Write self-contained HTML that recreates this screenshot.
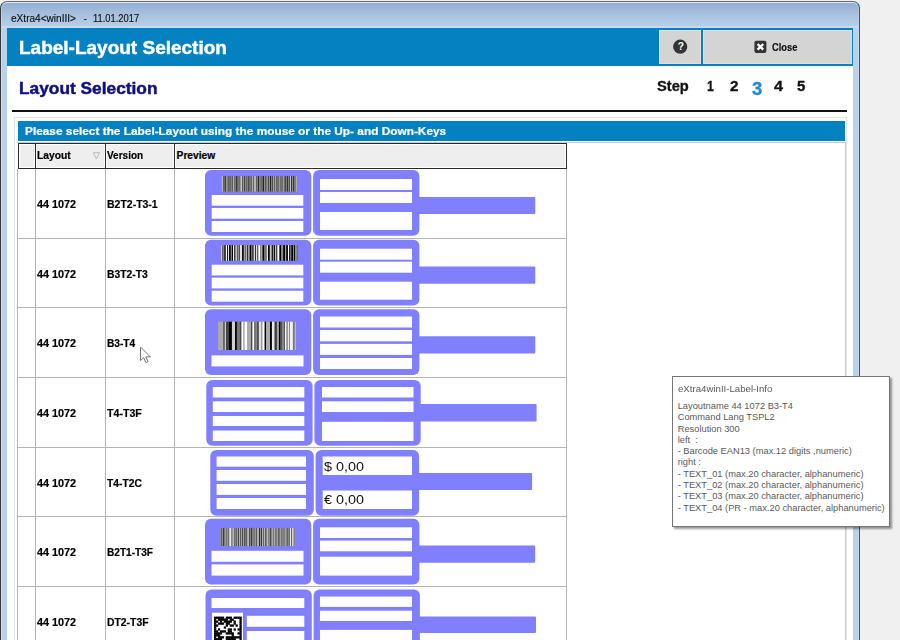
<!DOCTYPE html>
<html><head><meta charset="utf-8">
<style>
*{box-sizing:border-box;margin:0;padding:0}
html,body{width:900px;height:640px;overflow:hidden;background:#f0f0f0;font-family:"Liberation Sans",sans-serif;}
div{position:absolute}
.t{white-space:pre;transform-origin:0 0;line-height:normal}
#win{left:0;top:1px;width:860px;height:660px;border-radius:7px 7px 0 0;background:linear-gradient(#93add0 0px,#a9c3e0 14px,#b9d2eb 27px,#b9d2eb 100%);border:1px solid #6a6a6a;border-left:1.3px solid #3a3a3a;border-right:1.7px solid #1d5f7c;overflow:hidden}
#win:before{content:"";position:absolute;left:0;top:0;right:0;bottom:0;border:1px solid rgba(255,255,255,.75);border-radius:6px 6px 0 0;border-right-color:rgba(255,255,255,.2);border-left-color:rgba(255,255,255,.25)}
#content{left:7px;top:28px;width:846px;height:640px;background:#fff}
#bar{left:7px;top:28px;width:846px;height:38px;background:#0481c1}
.btn{top:29.5px;height:34.8px;background:#d4d4d4;box-shadow:inset 0 0 0 1px #e6dcd8}
#hr{left:12px;top:109.5px;width:835px;height:2px;background:#111}
#panel{left:14.2px;top:117px;width:833.3px;height:600px;border:1px solid #e4e4e4;background:#fff}
#grid{left:17.3px;top:141.8px;width:828.5px;height:600px;border:1px solid #cdcdcd;border-left:none;background:#fff}
#info{left:18px;top:121px;width:827px;height:19.8px;background:#0481c1}
.hd{top:142.8px;height:26px;background:#eee;border:1px solid #2a2a2a;box-shadow:inset 0 0 0 1px #fff}
.vl{top:169px;width:1px;height:600px;background:#b4b4b4}
.hl{left:18px;width:549px;height:1px;background:#b4b4b4}
#tip{left:671.8px;top:376.2px;width:218px;height:151.2px;background:#fff;border:1px solid #767676;box-shadow:2px 2px 2px rgba(0,0,0,.4)}
svg{position:absolute;left:0;top:0}
</style></head><body>
<div id="win"></div>
<div style="left:2px;top:26.2px;width:856px;height:1.8px;background:#c9d9ef"></div>
<div id="content"></div>
<div id="bar"></div>
<div class="btn" style="left:659.2px;width:41.8px"></div>
<div class="btn" style="left:702.8px;width:149px"></div>
<div id="hr"></div>
<div id="panel"></div>
<div id="grid"></div>
<div id="info"></div>
<div class="hd" style="left:18.2px;width:18px"></div>
<div class="hd" style="left:35.2px;width:70.5px"></div>
<div class="hd" style="left:104.7px;width:70.5px"></div>
<div class="hd" style="left:174.2px;width:393px"></div>
<div class="vl" style="left:17.3px"></div><div class="vl" style="left:35.2px"></div><div class="vl" style="left:104.7px"></div><div class="vl" style="left:174.2px"></div><div class="vl" style="left:566.2px"></div>
<div class="hl" style="top:237.5px"></div><div class="hl" style="top:307.1px"></div><div class="hl" style="top:376.8px"></div><div class="hl" style="top:446.5px"></div><div class="hl" style="top:516.1px"></div><div class="hl" style="top:585.8px"></div>
<svg width="900" height="640" viewBox="0 0 900 640">
<defs><filter id="bl" x="-5%" y="-5%" width="110%" height="110%"><feGaussianBlur stdDeviation="0.45 0"/></filter></defs>
<rect x="205.00" y="170.00" width="106.30" height="65.70" rx="6" fill="#8080ff"/><rect x="313.10" y="170.00" width="106.30" height="65.70" rx="6" fill="#8080ff"/><rect x="416.40" y="196.90" width="118.90" height="17.20" rx="1" fill="#8080ff"/><g filter="url(#bl)"><rect x="221.90" y="176.1" width="74.70" height="15.40" fill="#888"/><rect x="221.90" y="176.1" width="1.30" height="15.40" fill="#c8c8c8"/><rect x="222.90" y="176.1" width="1.20" height="15.40" fill="#585858"/><rect x="223.80" y="176.1" width="1.10" height="15.40" fill="#888888"/><rect x="224.60" y="176.1" width="1.80" height="15.40" fill="#404040"/><rect x="226.10" y="176.1" width="1.90" height="15.40" fill="#a0a0a0"/><rect x="227.70" y="176.1" width="1.20" height="15.40" fill="#404040"/><rect x="228.60" y="176.1" width="1.10" height="15.40" fill="#888888"/><rect x="229.40" y="176.1" width="1.80" height="15.40" fill="#606060"/><rect x="230.90" y="176.1" width="1.10" height="15.40" fill="#989898"/><rect x="231.70" y="176.1" width="1.80" height="15.40" fill="#585858"/><rect x="233.20" y="176.1" width="1.30" height="15.40" fill="#c8c8c8"/><rect x="234.20" y="176.1" width="1.20" height="15.40" fill="#585858"/><rect x="235.10" y="176.1" width="1.10" height="15.40" fill="#909090"/><rect x="235.90" y="176.1" width="1.20" height="15.40" fill="#202020"/><rect x="236.80" y="176.1" width="1.10" height="15.40" fill="#888888"/><rect x="237.60" y="176.1" width="1.30" height="15.40" fill="#404040"/><rect x="238.60" y="176.1" width="1.10" height="15.40" fill="#c8c8c8"/><rect x="239.40" y="176.1" width="1.30" height="15.40" fill="#404040"/><rect x="240.40" y="176.1" width="1.90" height="15.40" fill="#c8c8c8"/><rect x="242.00" y="176.1" width="1.30" height="15.40" fill="#585858"/><rect x="243.00" y="176.1" width="1.30" height="15.40" fill="#989898"/><rect x="244.00" y="176.1" width="1.30" height="15.40" fill="#404040"/><rect x="245.00" y="176.1" width="1.30" height="15.40" fill="#909090"/><rect x="246.00" y="176.1" width="1.80" height="15.40" fill="#606060"/><rect x="247.50" y="176.1" width="1.10" height="15.40" fill="#a0a0a0"/><rect x="248.30" y="176.1" width="1.50" height="15.40" fill="#303030"/><rect x="249.50" y="176.1" width="1.30" height="15.40" fill="#989898"/><rect x="250.50" y="176.1" width="1.80" height="15.40" fill="#606060"/><rect x="252.00" y="176.1" width="1.30" height="15.40" fill="#b0b0b0"/><rect x="253.00" y="176.1" width="1.50" height="15.40" fill="#606060"/><rect x="254.20" y="176.1" width="1.90" height="15.40" fill="#c8c8c8"/><rect x="255.80" y="176.1" width="1.80" height="15.40" fill="#606060"/><rect x="257.30" y="176.1" width="1.10" height="15.40" fill="#888888"/><rect x="258.10" y="176.1" width="1.30" height="15.40" fill="#202020"/><rect x="259.10" y="176.1" width="1.90" height="15.40" fill="#888888"/><rect x="260.70" y="176.1" width="1.30" height="15.40" fill="#585858"/><rect x="261.70" y="176.1" width="1.30" height="15.40" fill="#909090"/><rect x="262.70" y="176.1" width="1.80" height="15.40" fill="#202020"/><rect x="264.20" y="176.1" width="1.10" height="15.40" fill="#a0a0a0"/><rect x="265.00" y="176.1" width="1.80" height="15.40" fill="#585858"/><rect x="266.50" y="176.1" width="1.90" height="15.40" fill="#989898"/><rect x="268.10" y="176.1" width="1.20" height="15.40" fill="#404040"/><rect x="269.00" y="176.1" width="1.10" height="15.40" fill="#b0b0b0"/><rect x="269.80" y="176.1" width="1.80" height="15.40" fill="#202020"/><rect x="271.30" y="176.1" width="1.30" height="15.40" fill="#a0a0a0"/><rect x="272.30" y="176.1" width="1.30" height="15.40" fill="#303030"/><rect x="273.30" y="176.1" width="1.30" height="15.40" fill="#c8c8c8"/><rect x="274.30" y="176.1" width="1.30" height="15.40" fill="#404040"/><rect x="275.30" y="176.1" width="1.30" height="15.40" fill="#c8c8c8"/><rect x="276.30" y="176.1" width="1.50" height="15.40" fill="#404040"/><rect x="277.50" y="176.1" width="1.30" height="15.40" fill="#989898"/><rect x="278.50" y="176.1" width="1.20" height="15.40" fill="#404040"/><rect x="279.40" y="176.1" width="1.30" height="15.40" fill="#c8c8c8"/><rect x="280.40" y="176.1" width="1.30" height="15.40" fill="#404040"/><rect x="281.40" y="176.1" width="1.10" height="15.40" fill="#888888"/><rect x="282.20" y="176.1" width="1.50" height="15.40" fill="#606060"/><rect x="283.40" y="176.1" width="1.30" height="15.40" fill="#c8c8c8"/><rect x="284.40" y="176.1" width="1.80" height="15.40" fill="#404040"/><rect x="285.90" y="176.1" width="1.30" height="15.40" fill="#888888"/><rect x="286.90" y="176.1" width="1.50" height="15.40" fill="#303030"/><rect x="288.10" y="176.1" width="1.30" height="15.40" fill="#888888"/><rect x="289.10" y="176.1" width="1.20" height="15.40" fill="#484848"/><rect x="290.00" y="176.1" width="1.30" height="15.40" fill="#c8c8c8"/><rect x="291.00" y="176.1" width="1.30" height="15.40" fill="#303030"/><rect x="292.00" y="176.1" width="1.30" height="15.40" fill="#909090"/><rect x="293.00" y="176.1" width="1.20" height="15.40" fill="#303030"/><rect x="293.90" y="176.1" width="1.10" height="15.40" fill="#888888"/><rect x="294.70" y="176.1" width="1.20" height="15.40" fill="#585858"/><rect x="295.60" y="176.1" width="1.30" height="15.40" fill="#b0b0b0"/></g><rect x="211.70" y="195.00" width="91.60" height="10.70" fill="#fefeff"/><rect x="211.70" y="208.00" width="91.60" height="10.70" fill="#fefeff"/><rect x="211.70" y="221.00" width="91.60" height="11.00" fill="#fefeff"/><rect x="320.00" y="179.00" width="92.00" height="11.00" fill="#fefeff"/><rect x="320.00" y="192.00" width="92.00" height="11.00" fill="#fefeff"/><rect x="320.00" y="212.00" width="92.00" height="18.00" fill="#fefeff"/>
<rect x="205.00" y="239.70" width="106.30" height="65.70" rx="6" fill="#8080ff"/><rect x="313.10" y="239.70" width="106.30" height="65.70" rx="6" fill="#8080ff"/><rect x="416.40" y="266.60" width="118.90" height="17.20" rx="1" fill="#8080ff"/><g filter="url(#bl)"><rect x="221.40" y="245.1" width="75.60" height="15.70" fill="#888"/><rect x="221.40" y="245.1" width="1.20" height="15.70" fill="#ffffff"/><rect x="222.30" y="245.1" width="1.20" height="15.70" fill="#303030"/><rect x="223.20" y="245.1" width="1.20" height="15.70" fill="#909090"/><rect x="224.10" y="245.1" width="2.10" height="15.70" fill="#303030"/><rect x="225.90" y="245.1" width="1.50" height="15.70" fill="#ffffff"/><rect x="227.10" y="245.1" width="1.20" height="15.70" fill="#000000"/><rect x="228.00" y="245.1" width="1.20" height="15.70" fill="#ffffff"/><rect x="228.90" y="245.1" width="2.10" height="15.70" fill="#101010"/><rect x="230.70" y="245.1" width="1.50" height="15.70" fill="#909090"/><rect x="231.90" y="245.1" width="1.50" height="15.70" fill="#000000"/><rect x="233.10" y="245.1" width="1.50" height="15.70" fill="#ffffff"/><rect x="234.30" y="245.1" width="1.50" height="15.70" fill="#000000"/><rect x="235.50" y="245.1" width="1.50" height="15.70" fill="#ffffff"/><rect x="236.70" y="245.1" width="1.20" height="15.70" fill="#303030"/><rect x="237.60" y="245.1" width="1.50" height="15.70" fill="#a0a0a0"/><rect x="238.80" y="245.1" width="1.50" height="15.70" fill="#505050"/><rect x="240.00" y="245.1" width="2.30" height="15.70" fill="#e0e0e0"/><rect x="242.00" y="245.1" width="2.10" height="15.70" fill="#101010"/><rect x="243.80" y="245.1" width="1.20" height="15.70" fill="#e0e0e0"/><rect x="244.70" y="245.1" width="1.20" height="15.70" fill="#101010"/><rect x="245.60" y="245.1" width="1.50" height="15.70" fill="#e0e0e0"/><rect x="246.80" y="245.1" width="1.20" height="15.70" fill="#000000"/><rect x="247.70" y="245.1" width="2.30" height="15.70" fill="#a0a0a0"/><rect x="249.70" y="245.1" width="2.10" height="15.70" fill="#000000"/><rect x="251.50" y="245.1" width="1.20" height="15.70" fill="#c0c0c0"/><rect x="252.40" y="245.1" width="1.50" height="15.70" fill="#000000"/><rect x="253.60" y="245.1" width="1.50" height="15.70" fill="#ffffff"/><rect x="254.80" y="245.1" width="1.50" height="15.70" fill="#303030"/><rect x="256.00" y="245.1" width="1.50" height="15.70" fill="#e0e0e0"/><rect x="257.20" y="245.1" width="1.50" height="15.70" fill="#505050"/><rect x="258.40" y="245.1" width="2.30" height="15.70" fill="#ffffff"/><rect x="260.40" y="245.1" width="1.20" height="15.70" fill="#505050"/><rect x="261.30" y="245.1" width="1.50" height="15.70" fill="#c0c0c0"/><rect x="262.50" y="245.1" width="2.10" height="15.70" fill="#000000"/><rect x="264.30" y="245.1" width="1.50" height="15.70" fill="#909090"/><rect x="265.50" y="245.1" width="1.50" height="15.70" fill="#505050"/><rect x="266.70" y="245.1" width="1.50" height="15.70" fill="#ffffff"/><rect x="267.90" y="245.1" width="2.10" height="15.70" fill="#000000"/><rect x="269.70" y="245.1" width="2.30" height="15.70" fill="#c0c0c0"/><rect x="271.70" y="245.1" width="1.50" height="15.70" fill="#101010"/><rect x="272.90" y="245.1" width="1.50" height="15.70" fill="#909090"/><rect x="274.10" y="245.1" width="1.20" height="15.70" fill="#000000"/><rect x="275.00" y="245.1" width="1.50" height="15.70" fill="#c0c0c0"/><rect x="276.20" y="245.1" width="1.50" height="15.70" fill="#303030"/><rect x="277.40" y="245.1" width="2.30" height="15.70" fill="#ffffff"/><rect x="279.40" y="245.1" width="2.10" height="15.70" fill="#000000"/><rect x="281.20" y="245.1" width="2.30" height="15.70" fill="#909090"/><rect x="283.20" y="245.1" width="2.10" height="15.70" fill="#000000"/><rect x="285.00" y="245.1" width="1.50" height="15.70" fill="#a0a0a0"/><rect x="286.20" y="245.1" width="2.10" height="15.70" fill="#101010"/><rect x="288.00" y="245.1" width="1.50" height="15.70" fill="#ffffff"/><rect x="289.20" y="245.1" width="1.50" height="15.70" fill="#000000"/><rect x="290.40" y="245.1" width="1.20" height="15.70" fill="#a0a0a0"/><rect x="291.30" y="245.1" width="2.10" height="15.70" fill="#000000"/><rect x="293.10" y="245.1" width="1.20" height="15.70" fill="#909090"/><rect x="294.00" y="245.1" width="1.20" height="15.70" fill="#000000"/><rect x="294.90" y="245.1" width="2.30" height="15.70" fill="#909090"/><rect x="296.90" y="245.1" width="0.40" height="15.70" fill="#303030"/></g><rect x="211.70" y="264.70" width="91.60" height="10.70" fill="#fefeff"/><rect x="211.70" y="277.70" width="91.60" height="10.70" fill="#fefeff"/><rect x="211.70" y="290.70" width="91.60" height="11.00" fill="#fefeff"/><rect x="320.00" y="248.70" width="92.00" height="11.00" fill="#fefeff"/><rect x="320.00" y="261.70" width="92.00" height="11.00" fill="#fefeff"/><rect x="320.00" y="281.70" width="92.00" height="18.00" fill="#fefeff"/>
<rect x="205.00" y="309.30" width="106.30" height="65.70" rx="6" fill="#8080ff"/><rect x="313.10" y="309.30" width="106.30" height="65.70" rx="6" fill="#8080ff"/><rect x="416.40" y="336.20" width="118.90" height="17.20" rx="1" fill="#8080ff"/><g filter="url(#bl)"><rect x="218.10" y="321.7" width="77.50" height="28.30" fill="#888"/><rect x="218.10" y="321.7" width="5.20" height="28.30" fill="#aaaaaa"/><rect x="223.00" y="321.7" width="2.20" height="28.30" fill="#666666"/><rect x="224.90" y="321.7" width="1.40" height="28.30" fill="#cccccc"/><rect x="226.00" y="321.7" width="3.30" height="28.30" fill="#444444"/><rect x="229.00" y="321.7" width="3.20" height="28.30" fill="#000000"/><rect x="231.90" y="321.7" width="3.50" height="28.30" fill="#d0d0d0"/><rect x="235.10" y="321.7" width="2.00" height="28.30" fill="#000000"/><rect x="236.80" y="321.7" width="3.80" height="28.30" fill="#777777"/><rect x="240.30" y="321.7" width="1.40" height="28.30" fill="#333333"/><rect x="241.40" y="321.7" width="2.20" height="28.30" fill="#ffffff"/><rect x="243.30" y="321.7" width="1.70" height="28.30" fill="#aaaaaa"/><rect x="244.70" y="321.7" width="2.60" height="28.30" fill="#ffffff"/><rect x="247.00" y="321.7" width="4.30" height="28.30" fill="#aaaaaa"/><rect x="251.00" y="321.7" width="1.70" height="28.30" fill="#444444"/><rect x="252.40" y="321.7" width="1.90" height="28.30" fill="#ffffff"/><rect x="254.00" y="321.7" width="2.30" height="28.30" fill="#777777"/><rect x="256.00" y="321.7" width="1.50" height="28.30" fill="#888888"/><rect x="257.20" y="321.7" width="1.90" height="28.30" fill="#444444"/><rect x="258.80" y="321.7" width="2.60" height="28.30" fill="#e0e0e0"/><rect x="261.10" y="321.7" width="1.70" height="28.30" fill="#999999"/><rect x="262.50" y="321.7" width="2.40" height="28.30" fill="#ffffff"/><rect x="264.60" y="321.7" width="1.70" height="28.30" fill="#000000"/><rect x="266.00" y="321.7" width="4.30" height="28.30" fill="#aaaaaa"/><rect x="270.00" y="321.7" width="2.20" height="28.30" fill="#000000"/><rect x="271.90" y="321.7" width="2.60" height="28.30" fill="#e8e8e8"/><rect x="274.20" y="321.7" width="1.20" height="28.30" fill="#888888"/><rect x="275.10" y="321.7" width="2.00" height="28.30" fill="#333333"/><rect x="276.80" y="321.7" width="2.40" height="28.30" fill="#aaaaaa"/><rect x="278.90" y="321.7" width="1.70" height="28.30" fill="#000000"/><rect x="280.30" y="321.7" width="2.10" height="28.30" fill="#555555"/><rect x="282.10" y="321.7" width="2.20" height="28.30" fill="#888888"/><rect x="284.00" y="321.7" width="1.20" height="28.30" fill="#444444"/><rect x="284.90" y="321.7" width="1.70" height="28.30" fill="#ffffff"/><rect x="286.30" y="321.7" width="2.20" height="28.30" fill="#999999"/><rect x="288.20" y="321.7" width="1.20" height="28.30" fill="#ffffff"/><rect x="289.10" y="321.7" width="1.20" height="28.30" fill="#888888"/><rect x="290.00" y="321.7" width="3.20" height="28.30" fill="#f0f0f0"/><rect x="292.90" y="321.7" width="2.10" height="28.30" fill="#777777"/><rect x="294.70" y="321.7" width="1.20" height="28.30" fill="#c0c0c0"/></g><rect x="211.50" y="355.40" width="92.00" height="11.00" fill="#fefeff"/><rect x="320.00" y="316.50" width="92.00" height="11.00" fill="#fefeff"/><rect x="320.00" y="330.00" width="92.00" height="11.30" fill="#fefeff"/><rect x="320.00" y="343.90" width="92.00" height="11.00" fill="#fefeff"/><rect x="320.00" y="358.00" width="92.00" height="11.00" fill="#fefeff"/>
<rect x="206.30" y="380.00" width="106.30" height="65.70" rx="6" fill="#8080ff"/><rect x="314.40" y="380.00" width="106.30" height="65.70" rx="6" fill="#8080ff"/><rect x="417.70" y="404.00" width="118.90" height="17.50" rx="1" fill="#8080ff"/><rect x="212.80" y="387.00" width="91.50" height="10.50" fill="#fefeff"/><rect x="212.80" y="401.30" width="91.50" height="10.70" fill="#fefeff"/><rect x="212.80" y="416.00" width="91.50" height="10.00" fill="#fefeff"/><rect x="212.80" y="430.50" width="91.50" height="10.50" fill="#fefeff"/><rect x="322.00" y="387.00" width="91.50" height="10.50" fill="#fefeff"/><rect x="322.00" y="401.30" width="91.50" height="10.70" fill="#fefeff"/><rect x="322.00" y="421.80" width="91.50" height="19.20" fill="#fefeff"/>
<rect x="210.30" y="450.00" width="103.50" height="65.70" rx="6" fill="#8080ff"/><rect x="315.60" y="450.00" width="103.50" height="65.70" rx="6" fill="#8080ff"/><rect x="416.10" y="473.00" width="116.00" height="17.00" rx="1" fill="#8080ff"/><rect x="216.60" y="456.50" width="89.40" height="10.20" fill="#fefeff"/><rect x="216.60" y="470.00" width="89.40" height="10.80" fill="#fefeff"/><rect x="216.60" y="484.00" width="89.40" height="10.90" fill="#fefeff"/><rect x="216.60" y="498.00" width="89.40" height="11.00" fill="#fefeff"/><rect x="322.70" y="456.50" width="89.30" height="18.50" fill="#fefeff"/><rect x="322.70" y="490.50" width="89.30" height="18.50" fill="#fefeff"/>
<rect x="205.00" y="518.80" width="106.30" height="65.70" rx="6" fill="#8080ff"/><rect x="313.10" y="518.80" width="106.30" height="65.70" rx="6" fill="#8080ff"/><rect x="416.40" y="545.60" width="118.80" height="17.10" rx="1" fill="#8080ff"/><g filter="url(#bl)"><rect x="220.40" y="527.9" width="74.60" height="18.10" fill="#888"/><rect x="220.40" y="527.9" width="1.30" height="18.10" fill="#a0a0a0"/><rect x="221.40" y="527.9" width="1.20" height="18.10" fill="#383838"/><rect x="222.30" y="527.9" width="1.30" height="18.10" fill="#b0b0b0"/><rect x="223.30" y="527.9" width="1.30" height="18.10" fill="#101010"/><rect x="224.30" y="527.9" width="2.50" height="18.10" fill="#989898"/><rect x="226.50" y="527.9" width="1.20" height="18.10" fill="#585858"/><rect x="227.40" y="527.9" width="1.30" height="18.10" fill="#b8b8b8"/><rect x="228.40" y="527.9" width="1.20" height="18.10" fill="#484848"/><rect x="229.30" y="527.9" width="2.50" height="18.10" fill="#e8e8e8"/><rect x="231.50" y="527.9" width="1.30" height="18.10" fill="#383838"/><rect x="232.50" y="527.9" width="1.50" height="18.10" fill="#e8e8e8"/><rect x="233.70" y="527.9" width="1.30" height="18.10" fill="#585858"/><rect x="234.70" y="527.9" width="1.30" height="18.10" fill="#a0a0a0"/><rect x="235.70" y="527.9" width="1.20" height="18.10" fill="#383838"/><rect x="236.60" y="527.9" width="1.80" height="18.10" fill="#a0a0a0"/><rect x="238.10" y="527.9" width="1.20" height="18.10" fill="#404040"/><rect x="239.00" y="527.9" width="1.30" height="18.10" fill="#b0b0b0"/><rect x="240.00" y="527.9" width="1.30" height="18.10" fill="#585858"/><rect x="241.00" y="527.9" width="1.30" height="18.10" fill="#a8a8a8"/><rect x="242.00" y="527.9" width="1.30" height="18.10" fill="#484848"/><rect x="243.00" y="527.9" width="1.80" height="18.10" fill="#a0a0a0"/><rect x="244.50" y="527.9" width="1.10" height="18.10" fill="#101010"/><rect x="245.30" y="527.9" width="1.30" height="18.10" fill="#989898"/><rect x="246.30" y="527.9" width="1.20" height="18.10" fill="#484848"/><rect x="247.20" y="527.9" width="2.50" height="18.10" fill="#b8b8b8"/><rect x="249.40" y="527.9" width="1.20" height="18.10" fill="#101010"/><rect x="250.30" y="527.9" width="1.30" height="18.10" fill="#a8a8a8"/><rect x="251.30" y="527.9" width="1.30" height="18.10" fill="#101010"/><rect x="252.30" y="527.9" width="1.50" height="18.10" fill="#a8a8a8"/><rect x="253.50" y="527.9" width="1.30" height="18.10" fill="#585858"/><rect x="254.50" y="527.9" width="1.80" height="18.10" fill="#989898"/><rect x="256.00" y="527.9" width="1.10" height="18.10" fill="#404040"/><rect x="256.80" y="527.9" width="2.50" height="18.10" fill="#b0b0b0"/><rect x="259.00" y="527.9" width="1.10" height="18.10" fill="#101010"/><rect x="259.80" y="527.9" width="1.50" height="18.10" fill="#989898"/><rect x="261.00" y="527.9" width="1.30" height="18.10" fill="#383838"/><rect x="262.00" y="527.9" width="1.50" height="18.10" fill="#b0b0b0"/><rect x="263.20" y="527.9" width="1.10" height="18.10" fill="#585858"/><rect x="264.00" y="527.9" width="1.80" height="18.10" fill="#b8b8b8"/><rect x="265.50" y="527.9" width="1.20" height="18.10" fill="#101010"/><rect x="266.40" y="527.9" width="2.50" height="18.10" fill="#b8b8b8"/><rect x="268.60" y="527.9" width="1.10" height="18.10" fill="#404040"/><rect x="269.40" y="527.9" width="1.30" height="18.10" fill="#b0b0b0"/><rect x="270.40" y="527.9" width="1.20" height="18.10" fill="#101010"/><rect x="271.30" y="527.9" width="2.50" height="18.10" fill="#a8a8a8"/><rect x="273.50" y="527.9" width="1.20" height="18.10" fill="#484848"/><rect x="274.40" y="527.9" width="1.30" height="18.10" fill="#e8e8e8"/><rect x="275.40" y="527.9" width="1.30" height="18.10" fill="#404040"/><rect x="276.40" y="527.9" width="2.50" height="18.10" fill="#a0a0a0"/><rect x="278.60" y="527.9" width="1.10" height="18.10" fill="#101010"/><rect x="279.40" y="527.9" width="2.50" height="18.10" fill="#a0a0a0"/><rect x="281.60" y="527.9" width="1.20" height="18.10" fill="#404040"/><rect x="282.50" y="527.9" width="1.30" height="18.10" fill="#b0b0b0"/><rect x="283.50" y="527.9" width="1.30" height="18.10" fill="#585858"/><rect x="284.50" y="527.9" width="2.50" height="18.10" fill="#a0a0a0"/><rect x="286.70" y="527.9" width="1.30" height="18.10" fill="#484848"/><rect x="287.70" y="527.9" width="1.30" height="18.10" fill="#a8a8a8"/><rect x="288.70" y="527.9" width="1.30" height="18.10" fill="#383838"/><rect x="289.70" y="527.9" width="1.80" height="18.10" fill="#e8e8e8"/><rect x="291.20" y="527.9" width="1.20" height="18.10" fill="#484848"/><rect x="292.10" y="527.9" width="1.80" height="18.10" fill="#e8e8e8"/><rect x="293.60" y="527.9" width="1.20" height="18.10" fill="#585858"/><rect x="294.50" y="527.9" width="0.80" height="18.10" fill="#a0a0a0"/></g><rect x="211.50" y="550.80" width="92.00" height="11.00" fill="#fefeff"/><rect x="211.50" y="564.40" width="92.00" height="11.20" fill="#fefeff"/><rect x="320.00" y="527.30" width="92.00" height="10.70" fill="#fefeff"/><rect x="320.00" y="540.60" width="92.00" height="10.70" fill="#fefeff"/><rect x="320.00" y="556.70" width="92.00" height="18.90" fill="#fefeff"/>
<rect x="205.50" y="589.50" width="106.30" height="65.70" rx="6" fill="#8080ff"/><rect x="313.60" y="589.50" width="106.30" height="65.70" rx="6" fill="#8080ff"/><rect x="416.90" y="616.60" width="119.10" height="16.50" rx="1" fill="#8080ff"/><rect x="211.50" y="598.00" width="92.80" height="10.00" fill="#fefeff"/><rect x="212.00" y="612.70" width="31.00" height="32.30" fill="#fefeff"/><rect x="214.00" y="616.60" width="2.26" height="2.26" fill="#000"/><rect x="215.96" y="616.60" width="2.26" height="2.26" fill="#000"/><rect x="217.92" y="616.60" width="2.26" height="2.26" fill="#000"/><rect x="219.88" y="616.60" width="2.26" height="2.26" fill="#000"/><rect x="221.84" y="616.60" width="2.26" height="2.26" fill="#000"/><rect x="225.76" y="616.60" width="2.26" height="2.26" fill="#000"/><rect x="227.72" y="616.60" width="2.26" height="2.26" fill="#000"/><rect x="229.68" y="616.60" width="2.26" height="2.26" fill="#000"/><rect x="233.60" y="616.60" width="2.26" height="2.26" fill="#000"/><rect x="235.56" y="616.60" width="2.26" height="2.26" fill="#000"/><rect x="237.52" y="616.60" width="2.26" height="2.26" fill="#000"/><rect x="239.48" y="616.60" width="2.26" height="2.26" fill="#000"/><rect x="214.00" y="618.56" width="2.26" height="2.26" fill="#000"/><rect x="217.92" y="618.56" width="2.26" height="2.26" fill="#000"/><rect x="219.88" y="618.56" width="2.26" height="2.26" fill="#000"/><rect x="221.84" y="618.56" width="2.26" height="2.26" fill="#000"/><rect x="223.80" y="618.56" width="2.26" height="2.26" fill="#000"/><rect x="225.76" y="618.56" width="2.26" height="2.26" fill="#000"/><rect x="229.68" y="618.56" width="2.26" height="2.26" fill="#000"/><rect x="231.64" y="618.56" width="2.26" height="2.26" fill="#000"/><rect x="239.48" y="618.56" width="2.26" height="2.26" fill="#000"/><rect x="214.00" y="620.52" width="2.26" height="2.26" fill="#000"/><rect x="215.96" y="620.52" width="2.26" height="2.26" fill="#000"/><rect x="219.88" y="620.52" width="2.26" height="2.26" fill="#000"/><rect x="223.80" y="620.52" width="2.26" height="2.26" fill="#000"/><rect x="225.76" y="620.52" width="2.26" height="2.26" fill="#000"/><rect x="227.72" y="620.52" width="2.26" height="2.26" fill="#000"/><rect x="229.68" y="620.52" width="2.26" height="2.26" fill="#000"/><rect x="233.60" y="620.52" width="2.26" height="2.26" fill="#000"/><rect x="239.48" y="620.52" width="2.26" height="2.26" fill="#000"/><rect x="214.00" y="622.48" width="2.26" height="2.26" fill="#000"/><rect x="217.92" y="622.48" width="2.26" height="2.26" fill="#000"/><rect x="219.88" y="622.48" width="2.26" height="2.26" fill="#000"/><rect x="221.84" y="622.48" width="2.26" height="2.26" fill="#000"/><rect x="225.76" y="622.48" width="2.26" height="2.26" fill="#000"/><rect x="227.72" y="622.48" width="2.26" height="2.26" fill="#000"/><rect x="233.60" y="622.48" width="2.26" height="2.26" fill="#000"/><rect x="239.48" y="622.48" width="2.26" height="2.26" fill="#000"/><rect x="214.00" y="624.44" width="2.26" height="2.26" fill="#000"/><rect x="215.96" y="624.44" width="2.26" height="2.26" fill="#000"/><rect x="225.76" y="624.44" width="2.26" height="2.26" fill="#000"/><rect x="229.68" y="624.44" width="2.26" height="2.26" fill="#000"/><rect x="231.64" y="624.44" width="2.26" height="2.26" fill="#000"/><rect x="235.56" y="624.44" width="2.26" height="2.26" fill="#000"/><rect x="239.48" y="624.44" width="2.26" height="2.26" fill="#000"/><rect x="214.00" y="626.40" width="2.26" height="2.26" fill="#000"/><rect x="223.80" y="626.40" width="2.26" height="2.26" fill="#000"/><rect x="239.48" y="626.40" width="2.26" height="2.26" fill="#000"/><rect x="214.00" y="628.36" width="2.26" height="2.26" fill="#000"/><rect x="217.92" y="628.36" width="2.26" height="2.26" fill="#000"/><rect x="227.72" y="628.36" width="2.26" height="2.26" fill="#000"/><rect x="229.68" y="628.36" width="2.26" height="2.26" fill="#000"/><rect x="233.60" y="628.36" width="2.26" height="2.26" fill="#000"/><rect x="237.52" y="628.36" width="2.26" height="2.26" fill="#000"/><rect x="239.48" y="628.36" width="2.26" height="2.26" fill="#000"/><rect x="214.00" y="630.32" width="2.26" height="2.26" fill="#000"/><rect x="215.96" y="630.32" width="2.26" height="2.26" fill="#000"/><rect x="219.88" y="630.32" width="2.26" height="2.26" fill="#000"/><rect x="221.84" y="630.32" width="2.26" height="2.26" fill="#000"/><rect x="223.80" y="630.32" width="2.26" height="2.26" fill="#000"/><rect x="227.72" y="630.32" width="2.26" height="2.26" fill="#000"/><rect x="229.68" y="630.32" width="2.26" height="2.26" fill="#000"/><rect x="239.48" y="630.32" width="2.26" height="2.26" fill="#000"/><rect x="214.00" y="632.28" width="2.26" height="2.26" fill="#000"/><rect x="215.96" y="632.28" width="2.26" height="2.26" fill="#000"/><rect x="217.92" y="632.28" width="2.26" height="2.26" fill="#000"/><rect x="219.88" y="632.28" width="2.26" height="2.26" fill="#000"/><rect x="225.76" y="632.28" width="2.26" height="2.26" fill="#000"/><rect x="227.72" y="632.28" width="2.26" height="2.26" fill="#000"/><rect x="229.68" y="632.28" width="2.26" height="2.26" fill="#000"/><rect x="231.64" y="632.28" width="2.26" height="2.26" fill="#000"/><rect x="237.52" y="632.28" width="2.26" height="2.26" fill="#000"/><rect x="239.48" y="632.28" width="2.26" height="2.26" fill="#000"/><rect x="214.00" y="634.24" width="2.26" height="2.26" fill="#000"/><rect x="215.96" y="634.24" width="2.26" height="2.26" fill="#000"/><rect x="217.92" y="634.24" width="2.26" height="2.26" fill="#000"/><rect x="231.64" y="634.24" width="2.26" height="2.26" fill="#000"/><rect x="239.48" y="634.24" width="2.26" height="2.26" fill="#000"/><rect x="214.00" y="636.20" width="2.26" height="2.26" fill="#000"/><rect x="217.92" y="636.20" width="2.26" height="2.26" fill="#000"/><rect x="219.88" y="636.20" width="2.26" height="2.26" fill="#000"/><rect x="221.84" y="636.20" width="2.26" height="2.26" fill="#000"/><rect x="225.76" y="636.20" width="2.26" height="2.26" fill="#000"/><rect x="227.72" y="636.20" width="2.26" height="2.26" fill="#000"/><rect x="229.68" y="636.20" width="2.26" height="2.26" fill="#000"/><rect x="231.64" y="636.20" width="2.26" height="2.26" fill="#000"/><rect x="233.60" y="636.20" width="2.26" height="2.26" fill="#000"/><rect x="235.56" y="636.20" width="2.26" height="2.26" fill="#000"/><rect x="237.52" y="636.20" width="2.26" height="2.26" fill="#000"/><rect x="239.48" y="636.20" width="2.26" height="2.26" fill="#000"/><rect x="214.00" y="638.16" width="2.26" height="2.26" fill="#000"/><rect x="215.96" y="638.16" width="2.26" height="2.26" fill="#000"/><rect x="217.92" y="638.16" width="2.26" height="2.26" fill="#000"/><rect x="219.88" y="638.16" width="2.26" height="2.26" fill="#000"/><rect x="225.76" y="638.16" width="2.26" height="2.26" fill="#000"/><rect x="227.72" y="638.16" width="2.26" height="2.26" fill="#000"/><rect x="229.68" y="638.16" width="2.26" height="2.26" fill="#000"/><rect x="231.64" y="638.16" width="2.26" height="2.26" fill="#000"/><rect x="233.60" y="638.16" width="2.26" height="2.26" fill="#000"/><rect x="239.48" y="638.16" width="2.26" height="2.26" fill="#000"/><rect x="214.00" y="640.12" width="2.26" height="2.26" fill="#000"/><rect x="219.88" y="640.12" width="2.26" height="2.26" fill="#000"/><rect x="221.84" y="640.12" width="2.26" height="2.26" fill="#000"/><rect x="223.80" y="640.12" width="2.26" height="2.26" fill="#000"/><rect x="225.76" y="640.12" width="2.26" height="2.26" fill="#000"/><rect x="229.68" y="640.12" width="2.26" height="2.26" fill="#000"/><rect x="231.64" y="640.12" width="2.26" height="2.26" fill="#000"/><rect x="237.52" y="640.12" width="2.26" height="2.26" fill="#000"/><rect x="214.00" y="642.08" width="2.26" height="2.26" fill="#000"/><rect x="215.96" y="642.08" width="2.26" height="2.26" fill="#000"/><rect x="217.92" y="642.08" width="2.26" height="2.26" fill="#000"/><rect x="219.88" y="642.08" width="2.26" height="2.26" fill="#000"/><rect x="221.84" y="642.08" width="2.26" height="2.26" fill="#000"/><rect x="223.80" y="642.08" width="2.26" height="2.26" fill="#000"/><rect x="225.76" y="642.08" width="2.26" height="2.26" fill="#000"/><rect x="227.72" y="642.08" width="2.26" height="2.26" fill="#000"/><rect x="229.68" y="642.08" width="2.26" height="2.26" fill="#000"/><rect x="231.64" y="642.08" width="2.26" height="2.26" fill="#000"/><rect x="233.60" y="642.08" width="2.26" height="2.26" fill="#000"/><rect x="235.56" y="642.08" width="2.26" height="2.26" fill="#000"/><rect x="237.52" y="642.08" width="2.26" height="2.26" fill="#000"/><rect x="239.48" y="642.08" width="2.26" height="2.26" fill="#000"/><rect x="246.80" y="615.80" width="57.50" height="11.00" fill="#fefeff"/><rect x="246.80" y="631.00" width="57.50" height="14.00" fill="#fefeff"/><rect x="320.00" y="596.60" width="92.00" height="10.30" fill="#fefeff"/><rect x="320.00" y="610.70" width="92.00" height="10.30" fill="#fefeff"/><rect x="320.00" y="629.90" width="92.00" height="15.10" fill="#fefeff"/>
<circle cx="680.2" cy="46.7" r="7.1" fill="#333"/>
<rect x="754.4" y="40.8" width="12" height="12.1" rx="2" fill="#333"/>
<path d="M757.6 44 L763.2 49.7 M763.2 44 L757.6 49.7" stroke="#fff" stroke-width="2.4" stroke-linecap="butt"/>
<path d="M93.3 152.7 H99.5 L96.4 158.8 Z" fill="none" stroke="#b4b4b4" stroke-width="0.9"/>
<path d="M140.5 347 V360.6 L143.6 357.7 L145.9 362.6 L148.1 361.6 L145.9 356.9 H150.4 Z" fill="#fff" stroke="#666" stroke-width="0.9" stroke-linejoin="round"/>
</svg>
<div class="t" style="left:37.10px;top:198.95px;font-size:10px;color:#000;font-weight:bold;transform:scaleX(1.0816);-webkit-text-stroke:.2px #000;">44 1072</div><div class="t" style="left:107.30px;top:198.95px;font-size:10px;color:#000;font-weight:bold;transform:scaleX(1.0486);-webkit-text-stroke:.2px #000;">B2T2-T3-1</div><div class="t" style="left:37.10px;top:268.65px;font-size:10px;color:#000;font-weight:bold;transform:scaleX(1.0816);-webkit-text-stroke:.2px #000;">44 1072</div><div class="t" style="left:107.30px;top:268.65px;font-size:10px;color:#000;font-weight:bold;transform:scaleX(1.0317);-webkit-text-stroke:.2px #000;">B3T2-T3</div><div class="t" style="left:37.10px;top:338.25px;font-size:10px;color:#000;font-weight:bold;transform:scaleX(1.0816);-webkit-text-stroke:.2px #000;">44 1072</div><div class="t" style="left:107.30px;top:338.25px;font-size:10px;color:#000;font-weight:bold;transform:scaleX(1.0144);-webkit-text-stroke:.2px #000;">B3-T4</div><div class="t" style="left:37.10px;top:407.95px;font-size:10px;color:#000;font-weight:bold;transform:scaleX(1.0816);-webkit-text-stroke:.2px #000;">44 1072</div><div class="t" style="left:107.30px;top:407.95px;font-size:10px;color:#000;font-weight:bold;transform:scaleX(1.0610);-webkit-text-stroke:.2px #000;">T4-T3F</div><div class="t" style="left:37.10px;top:477.65px;font-size:10px;color:#000;font-weight:bold;transform:scaleX(1.0816);-webkit-text-stroke:.2px #000;">44 1072</div><div class="t" style="left:107.30px;top:477.65px;font-size:10px;color:#000;font-weight:bold;transform:scaleX(1.0265);-webkit-text-stroke:.2px #000;">T4-T2C</div><div class="t" style="left:37.10px;top:547.25px;font-size:10px;color:#000;font-weight:bold;transform:scaleX(1.0816);-webkit-text-stroke:.2px #000;">44 1072</div><div class="t" style="left:107.30px;top:547.25px;font-size:10px;color:#000;font-weight:bold;transform:scaleX(1.0099);-webkit-text-stroke:.2px #000;">B2T1-T3F</div><div class="t" style="left:37.10px;top:616.95px;font-size:10px;color:#000;font-weight:bold;transform:scaleX(1.0816);-webkit-text-stroke:.2px #000;">44 1072</div><div class="t" style="left:107.30px;top:616.95px;font-size:10px;color:#000;font-weight:bold;transform:scaleX(1.0375);-webkit-text-stroke:.2px #000;">DT2-T3F</div><div class="t" style="left:11.00px;top:12.40px;font-size:10.5px;color:#111;transform:scaleX(0.9598);-webkit-text-stroke:.15px #111;">eXtra4&lt;winIII&gt;</div><div class="t" style="left:83.50px;top:12.40px;font-size:10.5px;color:#111;">-</div><div class="t" style="left:92.60px;top:12.40px;font-size:10.5px;color:#111;transform:scaleX(0.8925);-webkit-text-stroke:.15px #111;">11.01.2017</div><div class="t" style="left:19.20px;top:37.05px;font-size:18.4px;color:#fff;font-weight:bold;transform:scaleX(1.0328);-webkit-text-stroke:.45px #fff;">Label-Layout Selection</div><div class="t" style="left:19.20px;top:80.02px;font-size:16px;color:#10107c;font-weight:bold;transform:scaleX(1.0820);-webkit-text-stroke:.45px #10107c;">Layout Selection</div><div class="t" style="left:656.80px;top:78.06px;font-size:14.3px;color:#111;font-weight:bold;transform:scaleX(1.0271);-webkit-text-stroke:.3px #111;">Step</div><div class="t" style="left:707.20px;top:78.33px;font-size:14px;color:#111;font-weight:bold;transform:scaleX(0.8752);-webkit-text-stroke:.3px #111;">1</div><div class="t" style="left:729.50px;top:78.33px;font-size:14px;color:#111;font-weight:bold;transform:scaleX(1.0940);-webkit-text-stroke:.3px #111;">2</div><div class="t" style="left:774.00px;top:78.33px;font-size:14px;color:#111;font-weight:bold;transform:scaleX(1.1583);-webkit-text-stroke:.3px #111;">4</div><div class="t" style="left:797.20px;top:78.33px;font-size:14px;color:#111;font-weight:bold;transform:scaleX(1.0682);-webkit-text-stroke:.3px #111;">5</div><div class="t" style="left:752.20px;top:78.91px;font-size:18px;color:#1c8acb;font-weight:bold;transform:scaleX(1.0310);-webkit-text-stroke:.3px #1c8acb;">3</div><div class="t" style="left:25.30px;top:125.32px;font-size:10.7px;color:#fff;font-weight:bold;transform:scaleX(1.1081);-webkit-text-stroke:.2px #fff;">Please select the Label-Layout using the mouse or the Up- and Down-Keys</div><div class="t" style="left:37.10px;top:150.47px;font-size:10.2px;color:#000;font-weight:bold;transform:scaleX(1.0103);-webkit-text-stroke:.2px #000;">Layout</div><div class="t" style="left:106.60px;top:150.47px;font-size:10.2px;color:#000;font-weight:bold;transform:scaleX(0.9817);-webkit-text-stroke:.2px #000;">Version</div><div class="t" style="left:176.60px;top:150.47px;font-size:10.2px;color:#000;font-weight:bold;-webkit-text-stroke:.2px #000;">Preview</div><div class="t" style="left:771.80px;top:40.12px;font-size:11.8px;color:#111;font-weight:bold;transform:scaleX(0.7899);-webkit-text-stroke:.2px #111;">Close</div><div class="t" style="left:677.70px;top:41.17px;font-size:10.2px;color:#fff;font-weight:bold;">?</div><div class="t" style="left:324.00px;top:458.94px;font-size:13px;color:#111;transform:scaleX(1.1068);">$ 0,00</div><div class="t" style="left:324.00px;top:492.24px;font-size:13px;color:#111;transform:scaleX(1.1068);">€ 0,00</div>
<div id="tip"></div>
<div class="t" style="left:677.60px;top:384.38px;font-size:9.3px;color:#5a5a5a;transform:scaleX(1.0374);">eXtra4winII-Label-Info</div><div class="t" style="left:677.70px;top:400.98px;font-size:9.3px;color:#5a5a5a;">Layoutname 44 1072 B3-T4</div><div class="t" style="left:677.70px;top:412.28px;font-size:9.3px;color:#5a5a5a;">Command Lang TSPL2</div><div class="t" style="left:677.70px;top:423.58px;font-size:9.3px;color:#5a5a5a;">Resolution 300</div><div class="t" style="left:677.70px;top:434.88px;font-size:9.3px;color:#5a5a5a;">left  :</div><div class="t" style="left:677.70px;top:446.18px;font-size:9.3px;color:#5a5a5a;">- Barcode EAN13 (max.12 digits ,numeric)</div><div class="t" style="left:677.70px;top:457.48px;font-size:9.3px;color:#5a5a5a;">right :</div><div class="t" style="left:677.70px;top:468.78px;font-size:9.3px;color:#5a5a5a;">- TEXT_01 (max.20 character, alphanumeric)</div><div class="t" style="left:677.70px;top:480.08px;font-size:9.3px;color:#5a5a5a;">- TEXT_02 (max.20 character, alphanumeric)</div><div class="t" style="left:677.70px;top:491.38px;font-size:9.3px;color:#5a5a5a;">- TEXT_03 (max.20 character, alphanumeric)</div><div class="t" style="left:677.70px;top:502.68px;font-size:9.3px;color:#5a5a5a;">- TEXT_04 (PR - max.20 character, alphanumeric)</div>
</body></html>
